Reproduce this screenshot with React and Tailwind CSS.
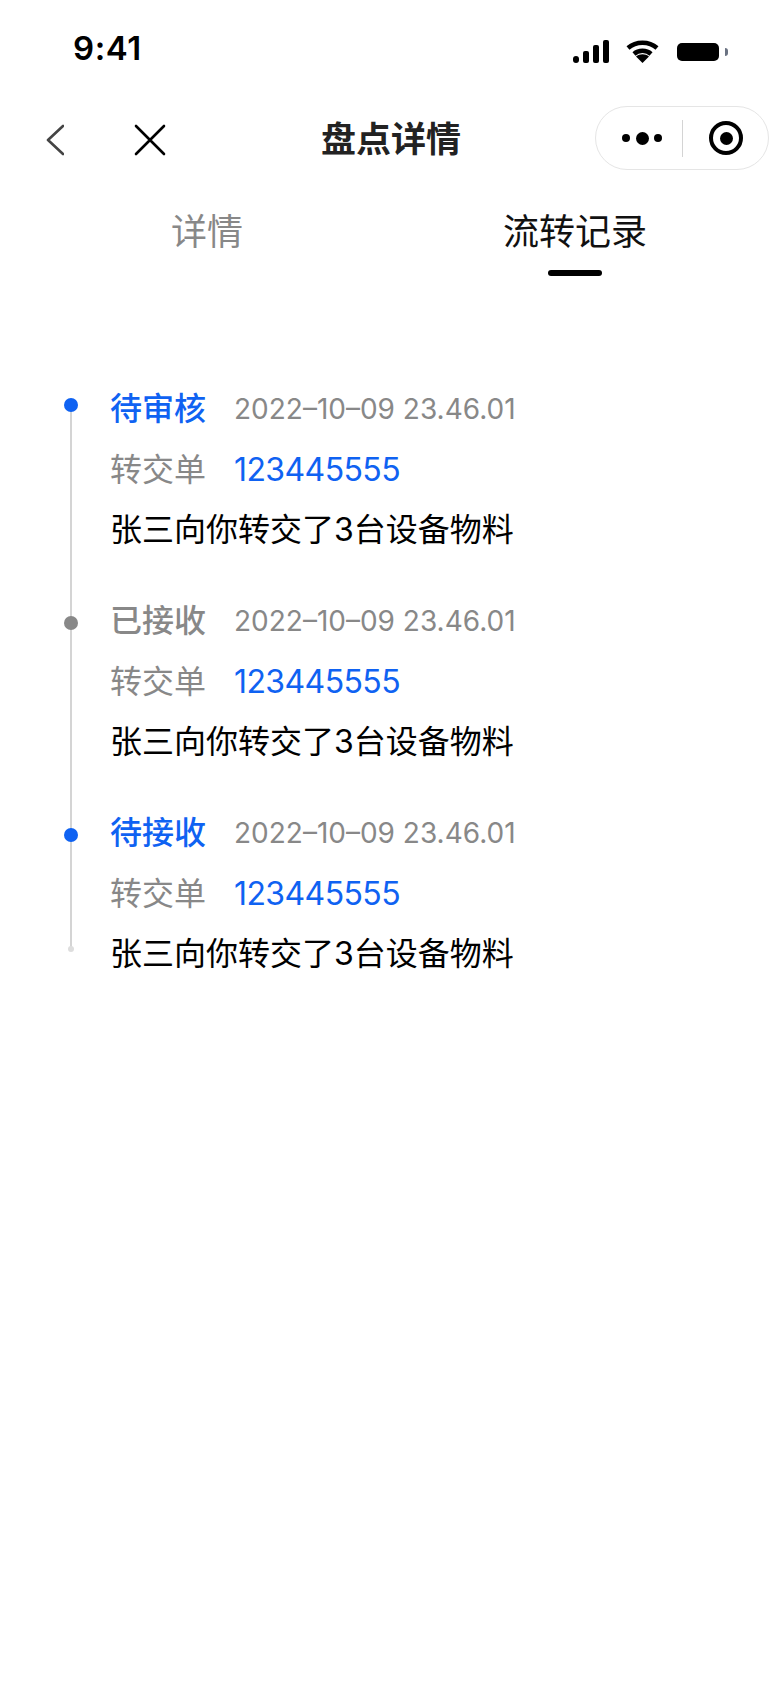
import React from 'react';

const fontStack = 'font-["Inter","Noto_Sans_CJK_SC",sans-serif]';

const records = [
  { status: '待审核', active: true, dotClass: 'mt-[19px]' },
  { status: '已接收', active: false, dotClass: 'mt-[25px]' },
  { status: '待接收', active: true, dotClass: 'mt-[25px]' },
];

function StatusBar() {
  return (
    <div className="flex h-[100px] items-start justify-between pl-[73px] pr-[52px]">
      <span className="mt-[28px] text-[33px] font-semibold leading-[40px] tracking-[0.6px] text-black">9:41</span>
      <div className="mt-[40px] flex items-center">
        <svg width="36" height="23" viewBox="0 0 36 23" fill="#000">
          <rect x="0" y="16" width="6" height="7" rx="3" />
          <rect x="10" y="11" width="6" height="12" rx="2" />
          <rect x="20" y="5" width="6" height="18" rx="2" />
          <rect x="30" y="0" width="6" height="23" rx="2" />
        </svg>
        <svg className="ml-[17px]" width="33" height="23" viewBox="0 0 33 23" fill="none" stroke="#000" strokeWidth="4.5">
          <path d="M2 8C10 1 23 1 31 8" />
          <path d="M8 14C12.5 9.8 20.5 9.8 25 14" />
          <path d="M10 16.4 16.5 23l6.5-6.6c-3.6-3-9.4-3-13 0z" fill="#000" stroke="none" />
        </svg>
        <div className="ml-[18px] h-[18px] w-[42px] rounded-[5px] bg-black" />
        <div className="ml-[6px] h-[8px] w-[3px] rounded-r-full bg-gray-500" />
      </div>
    </div>
  );
}

function NavBar() {
  return (
    <div className="relative flex h-[78px] items-center pl-[46px] pr-[11px]">
      <svg className="mt-[2px]" width="18" height="32" viewBox="0 0 18 32" fill="none" stroke="#444" strokeWidth="2.6" strokeLinecap="round" strokeLinejoin="round">
        <path d="M17 2 2 16l15 14" />
      </svg>
      <svg className="ml-[70px] mt-[2px]" width="32" height="32" viewBox="0 0 32 32" fill="none" stroke="#000" strokeWidth="2.6" strokeLinecap="round">
        <path d="M2 2l28 28M30 2 2 30" />
      </svg>
      <span className="absolute left-[2px] right-0 text-center text-[35px] font-bold leading-[48px] text-[#222]">盘点详情</span>
      <div className="relative ml-auto -mt-[2px] flex h-[64px] w-[174px] items-center rounded-full border border-[#e5e5e5] bg-white">
        <div className="ml-[26px] flex w-[40px] items-center justify-between">
          <div className="h-[8px] w-[8px] rounded-full bg-black" />
          <div className="h-[13px] w-[13px] rounded-full bg-black" />
          <div className="h-[8px] w-[8px] rounded-full bg-black" />
        </div>
        <div className="ml-[20px] h-[37px] w-[1px] bg-[#d4d4d4]" />
        <div className="ml-[26px] flex h-[34px] w-[34px] items-center justify-center rounded-full border-[4px] border-black">
          <div className="h-[13px] w-[13px] rounded-full bg-black" />
        </div>
      </div>
    </div>
  );
}

function Tabs() {
  return (
    <div className="grid grid-cols-2 pl-[23px] pr-[21px] pt-[27px]">
      <div className="flex flex-col items-center">
        <span className="text-[36px] leading-[54px] text-[#888]">详情</span>
      </div>
      <div className="flex flex-col items-center">
        <span className="text-[36px] leading-[54px] text-[#111]">流转记录</span>
        <div className="mt-[11px] h-[6px] w-[54px] rounded-full bg-black" />
      </div>
    </div>
  );
}

function RecordItem({ status, active, dotClass }) {
  return (
    <div className="flex">
      <div className="w-[110px] pl-[64px]">
        <div className={`h-[14px] w-[14px] rounded-full ${dotClass} ${active ? 'bg-[#0f62f2]' : 'bg-[#888]'}`} />
      </div>
      <div>
        <div className="flex h-[60px] items-center">
          <span className={`w-[124px] text-[32px] font-medium ${active ? 'text-[#0f62f2]' : 'text-[#888]'}`}>{status}</span>
          <span className="text-[28px] text-[#888]">2022–10–09 23.46.01</span>
        </div>
        <div className="flex h-[60px] items-center pt-[2px]">
          <span className="w-[124px] text-[32px] text-[#888]">转交单</span>
          <span className="text-[32px] tracking-[-0.6px] text-[#0f62f2]">123445555</span>
        </div>
        <div className="flex h-[60px] items-center pt-[2px] text-[32px] text-black">张三向你转交了3台设备物料</div>
      </div>
    </div>
  );
}

export default function App() {
  return (
    <div className={`min-h-[1688px] w-[780px] bg-white ${fontStack}`}>
      <StatusBar />
      <NavBar />
      <Tabs />
      <div className="relative mt-[103px] flex flex-col gap-[32px]">
        {/* rail behind the dots */}
        <div className="absolute left-[70px] top-[27px] h-[542px] w-[2px] bg-[#d4d4d4]" />
        <div className="absolute left-[68px] top-[567px] h-[6px] w-[6px] rounded-full bg-[#ddd]" />
        {records.map((record) => (
          <div key={record.status} className="relative">
            <RecordItem {...record} />
          </div>
        ))}
      </div>
    </div>
  );
}
